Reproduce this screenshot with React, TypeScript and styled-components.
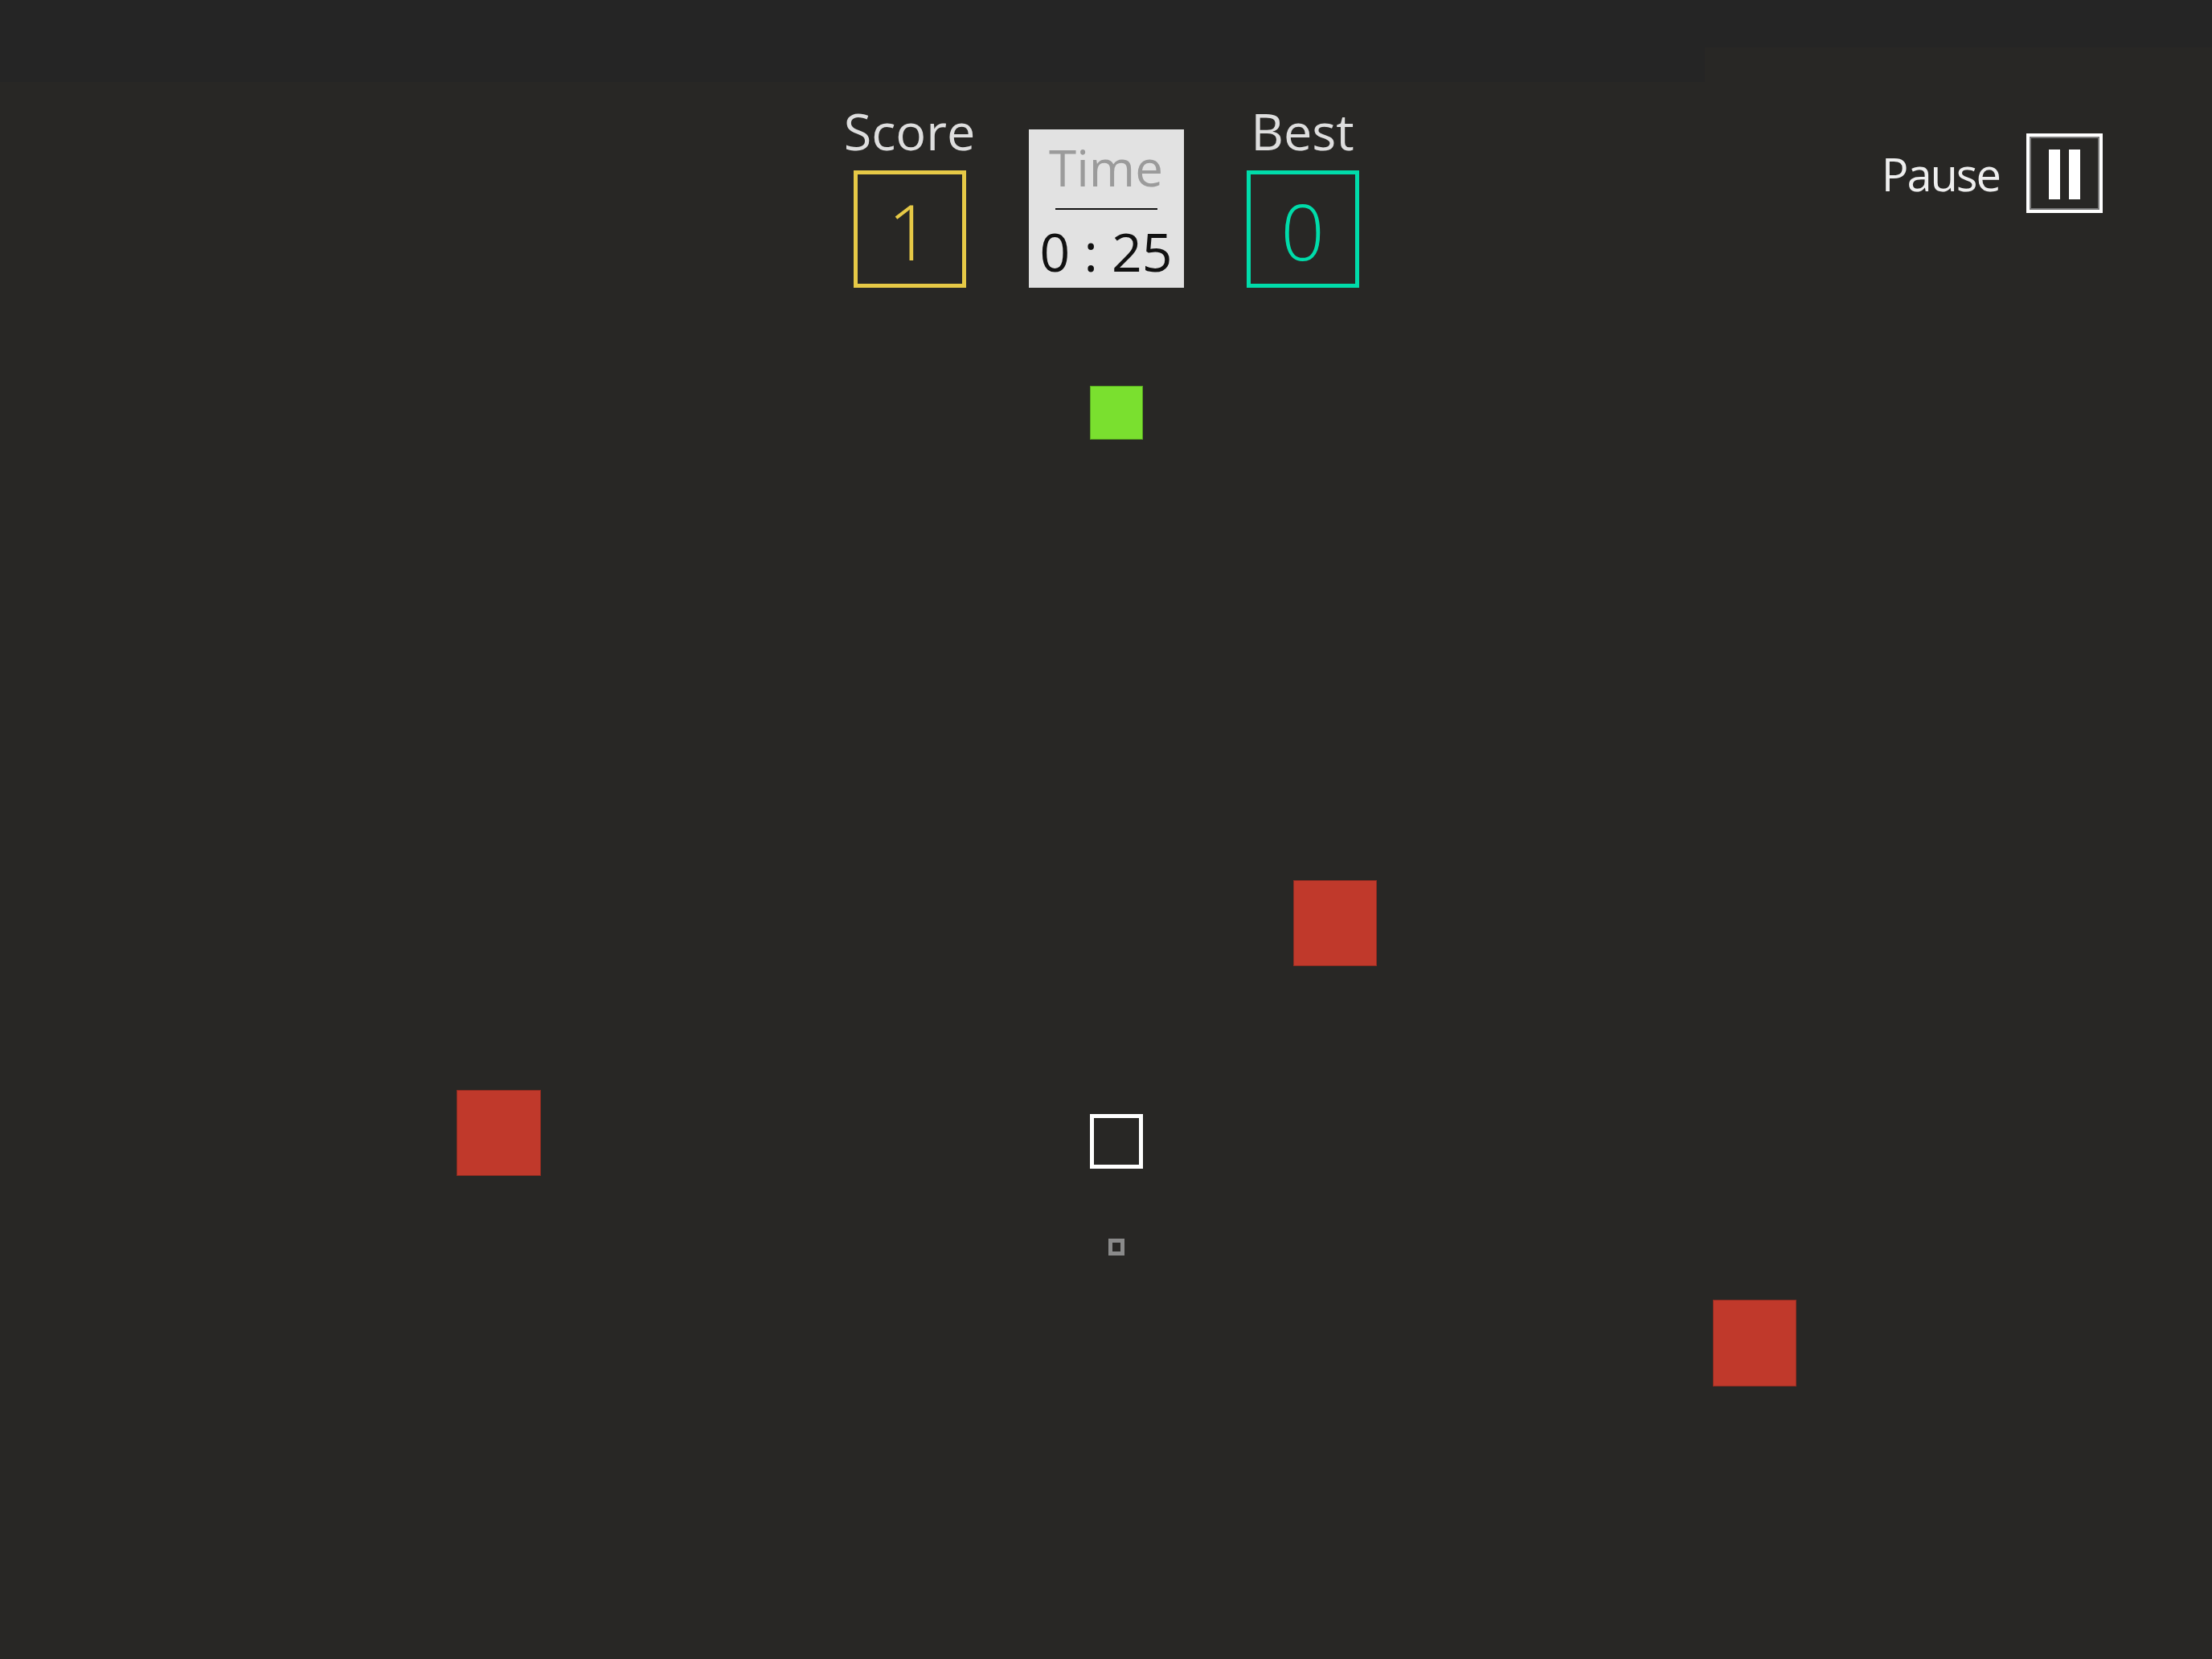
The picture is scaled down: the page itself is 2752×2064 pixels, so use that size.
import styled, { createGlobalStyle } from 'styled-components'

const GlobalStyle = createGlobalStyle`
  html, body {
    margin: 0;
    padding: 0;
    background: #282725;
  }
  body {
    font-family: 'Open Sans', 'Noto Sans', sans-serif;
  }
`

type Block = { id: string; x: number; y: number; w: number; h: number; kind: 'food' | 'enemy' | 'player' | 'trail' }

// positions on the play field (field starts right under the header)
const blocks: Block[] = [
  { id: 'food', x: 1356, y: 122, w: 66, h: 67, kind: 'food' },
  { id: 'enemy-1', x: 1609, y: 737, w: 104, h: 107, kind: 'enemy' },
  { id: 'enemy-2', x: 568, y: 998, w: 105, h: 107, kind: 'enemy' },
  { id: 'enemy-3', x: 2131, y: 1259, w: 104, h: 108, kind: 'enemy' },
  { id: 'player', x: 1356, y: 1028, w: 66, h: 68, kind: 'player' },
  { id: 'trail', x: 1379, y: 1183, w: 20, h: 21, kind: 'trail' },
]

const App = () => {
  return (
    <Page>
      <GlobalStyle />
      <TopStrip>
        <StripLeft />
        <StripRight />
      </TopStrip>

      <Header>
        <Stats>
          <StatColumn>
            <Label>Score</Label>
            <ScoreBox $color='#e6c946'>1</ScoreBox>
          </StatColumn>

          <TimeBox>
            <TimeLabel>Time</TimeLabel>
            <TimeRule />
            <TimeValue>0 : 25</TimeValue>
          </TimeBox>

          <StatColumn>
            <Label>Best</Label>
            <ScoreBox $color='#00dcaa'>0</ScoreBox>
          </StatColumn>
        </Stats>

        <PauseControl>
          <PauseText>Pause</PauseText>
          <PauseButton>
            <PauseBar />
            <PauseBar />
          </PauseButton>
        </PauseControl>
      </Header>

      <Field>
        {blocks.map((b) => (
          <Tile
            key={b.id}
            $kind={b.kind}
            style={{ left: b.x, top: b.y, width: b.w, height: b.h }}
          />
        ))}
      </Field>
    </Page>
  )
}

const Page = styled.div`
  min-height: 100vh;
  display: flex;
  flex-direction: column;
  background: #282725;
  overflow: hidden;
`

const TopStrip = styled.div`
  display: flex;
  align-items: flex-start;
  height: 102px;
`

const StripLeft = styled.div`
  width: 2121px;
  height: 102px;
  background: #252525;
`

const StripRight = styled.div`
  flex: 1;
  height: 59px;
  background: #252525;
`

const Header = styled.div`
  display: grid;
  grid-template-columns: 1fr auto 1fr;
  align-items: start;
  padding-top: 29px;
  height: 227px;
`

const Stats = styled.div`
  grid-column: 2;
  display: flex;
  align-items: flex-end;
  gap: 78px;
  height: 227px;
`

const StatColumn = styled.div`
  width: 140px;
  display: flex;
  flex-direction: column;
  align-items: center;
  gap: 18px;
`

const Label = styled.div`
  font-size: 63px;
  line-height: 1;
  color: #dedede;
  white-space: nowrap;
`

const ScoreBox = styled.div<{ $color: string }>`
  box-sizing: border-box;
  width: 140px;
  height: 146px;
  border: 5px solid ${(p) => p.$color};
  color: ${(p) => p.$color};
  display: flex;
  align-items: center;
  justify-content: center;
  font-size: 95px;
  font-weight: 300;
  line-height: 1;
  padding-top: 4px;
`

const TimeBox = styled.div`
  box-sizing: border-box;
  width: 193px;
  height: 197px;
  background: #e2e2e2;
  display: flex;
  flex-direction: column;
  align-items: center;
  padding-top: 16px;
`

const TimeLabel = styled.div`
  font-size: 62px;
  line-height: 1;
  color: #9b9b9b;
`

const TimeRule = styled.div`
  width: 127px;
  height: 2px;
  background: #111;
  margin-top: 20px;
`

const TimeValue = styled.div`
  font-size: 66px;
  line-height: 1;
  color: #111;
  margin-top: 18px;
  white-space: nowrap;
`

const PauseControl = styled.div`
  grid-column: 3;
  justify-self: end;
  display: flex;
  align-items: center;
  gap: 33px;
  margin-top: 35px;
  padding-right: 136px;
`

const PauseText = styled.span`
  font-size: 56px;
  line-height: 1;
  letter-spacing: -2px;
  color: #eeeeee;
`

const PauseButton = styled.div`
  box-sizing: border-box;
  width: 95px;
  height: 99px;
  border: 4px solid #ffffff;
  box-shadow: inset 0 0 0 2px #777777;
  display: flex;
  align-items: center;
  justify-content: center;
  gap: 11px;
  padding-top: 3px;
`

const PauseBar = styled.div`
  width: 14px;
  height: 62px;
  background: #ffffff;
`

const Field = styled.div`
  position: relative;
  flex: 1;
`

const tileLook = {
  food: 'background: #7ae02f; border: 1px solid #56a520;',
  enemy: 'background: #c0392b; border: 1px solid #8e2b21;',
  player: 'background: transparent; border: 5px solid #ffffff;',
  trail: 'background: transparent; border: 5px solid #8a8a8a;',
}

const Tile = styled.div<{ $kind: Block['kind'] }>`
  position: absolute;
  box-sizing: border-box;
  ${(p) => tileLook[p.$kind]}
`

export default App
